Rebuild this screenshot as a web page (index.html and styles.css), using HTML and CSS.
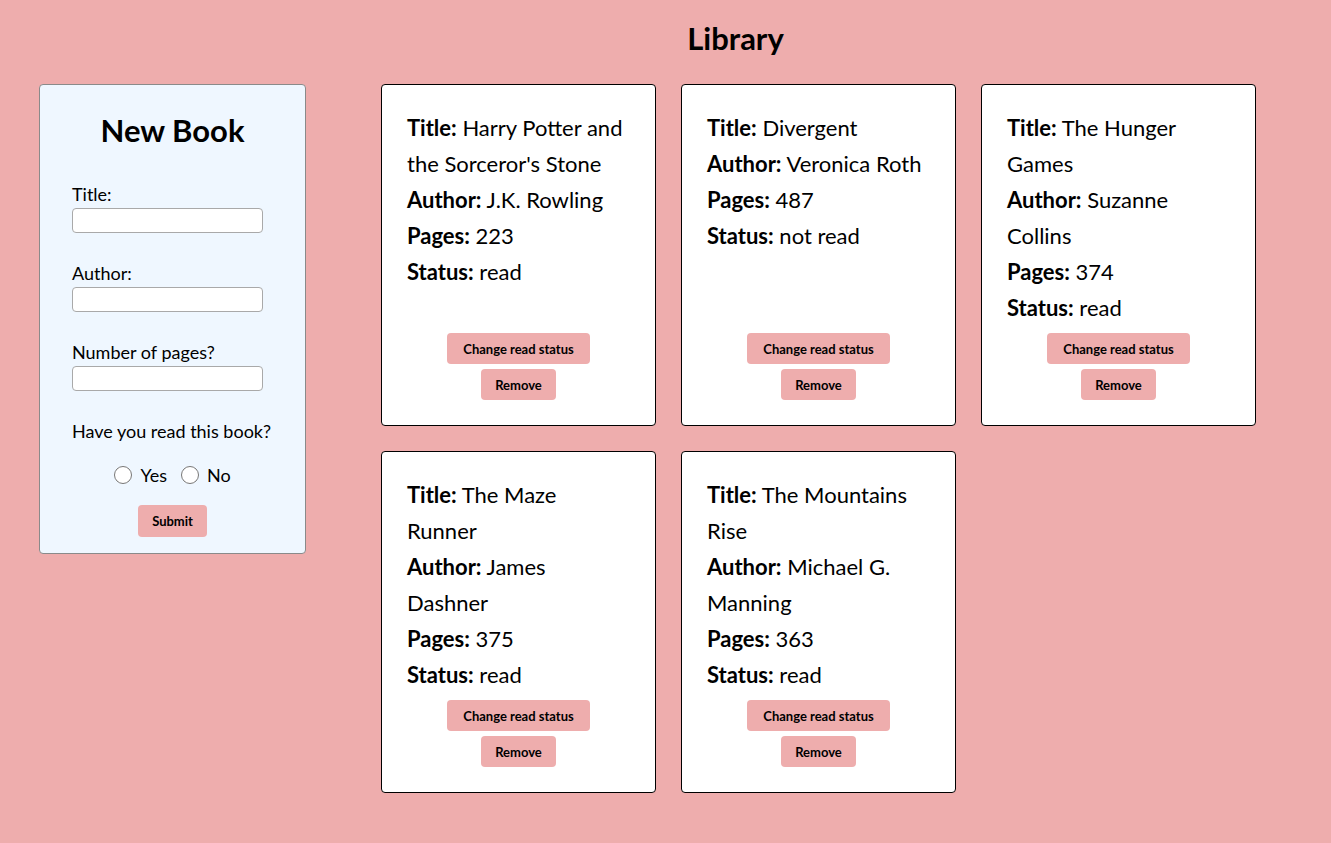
FILE: index.html
```html
<!DOCTYPE html>
<html lang="en">
<head>
<meta charset="utf-8">
<title>Library</title>
<link rel="stylesheet" href="styles.css">
</head>
<body>
<header class="top">
  <h1 class="title">Library</h1>
</header>
<div class="content">
  <form class="new-book">
    <h2 class="form-title">New Book</h2>
    <div class="field">
      <label class="label" for="t">Title:</label>
      <input class="input" id="t" type="text">
    </div>
    <div class="field">
      <label class="label" for="a">Author:</label>
      <input class="input" id="a" type="text">
    </div>
    <div class="field">
      <label class="label" for="p">Number of pages?</label>
      <input class="input" id="p" type="text">
    </div>
    <p class="question">Have you read this book?</p>
    <div class="radios">
      <label class="radio"><input type="radio" name="r" class="radio-input"> Yes</label>
      <label class="radio"><input type="radio" name="r" class="radio-input"> No</label>
    </div>
    <div class="submit-row"><button type="button" class="btn btn-submit">Submit</button></div>
  </form>
  <main class="cards">
    <div class="card">
      <div class="info">
        <p class="line"><b>Title:</b> Harry Potter and the Sorceror's Stone</p>
        <p class="line"><b>Author:</b> J.K. Rowling</p>
        <p class="line"><b>Pages:</b> 223</p>
        <p class="line"><b>Status:</b> read</p>
      </div>
      <div class="actions">
        <button class="btn btn-change">Change read status</button>
        <button class="btn btn-remove">Remove</button>
      </div>
    </div>
    <div class="card">
      <div class="info">
        <p class="line"><b>Title:</b> Divergent</p>
        <p class="line"><b>Author:</b> Veronica Roth</p>
        <p class="line"><b>Pages:</b> 487</p>
        <p class="line"><b>Status:</b> not read</p>
      </div>
      <div class="actions">
        <button class="btn btn-change">Change read status</button>
        <button class="btn btn-remove">Remove</button>
      </div>
    </div>
    <div class="card">
      <div class="info">
        <p class="line"><b>Title:</b> The Hunger Games</p>
        <p class="line"><b>Author:</b> Suzanne Collins</p>
        <p class="line"><b>Pages:</b> 374</p>
        <p class="line"><b>Status:</b> read</p>
      </div>
      <div class="actions">
        <button class="btn btn-change">Change read status</button>
        <button class="btn btn-remove">Remove</button>
      </div>
    </div>
    <div class="card">
      <div class="info">
        <p class="line"><b>Title:</b> The Maze Runner</p>
        <p class="line"><b>Author:</b> James Dashner</p>
        <p class="line"><b>Pages:</b> 375</p>
        <p class="line"><b>Status:</b> read</p>
      </div>
      <div class="actions">
        <button class="btn btn-change">Change read status</button>
        <button class="btn btn-remove">Remove</button>
      </div>
    </div>
    <div class="card">
      <div class="info">
        <p class="line"><b>Title:</b> The Mountains Rise</p>
        <p class="line"><b>Author:</b> Michael G. Manning</p>
        <p class="line"><b>Pages:</b> 363</p>
        <p class="line"><b>Status:</b> read</p>
      </div>
      <div class="actions">
        <button class="btn btn-change">Change read status</button>
        <button class="btn btn-remove">Remove</button>
      </div>
    </div>
  </main>
</div>
</body>
</html>
```
FILE: styles.css
```css
* { box-sizing: border-box; }
body {
  margin: 0;
  background: #eeadad;
  font-family: Lato, "Open Sans", sans-serif;
  color: #000;
}
.top {
  padding: 16px 0 0 140px;
  height: 84px;
}
.title {
  margin: 0;
  text-align: center;
  font-size: 31px;
  line-height: 44px;
  font-weight: 700;
}
.content {
  display: flex;
  align-items: flex-start;
  padding-left: 39px;
  gap: 75px;
}
.new-book {
  width: 267px;
  height: 470px;
  background: #eff7ff;
  border: 1px solid #8a8a8a;
  border-radius: 4px;
  padding: 23px 32px 15px;
}
.form-title {
  margin: 0 0 27px;
  text-align: center;
  font-size: 31px;
  line-height: 45px;
  font-weight: 700;
}
.field { margin-bottom: 26px; }
.label {
  display: block;
  font-size: 18px;
  line-height: 28px;
}
.input {
  display: block;
  width: 191px;
  height: 25px;
  border: 1px solid #a9a9a9;
  border-radius: 4px;
  background: #fff;
  margin: 0;
}
.question {
  margin: 0 0 16px;
  font-size: 18px;
  line-height: 28px;
  white-space: nowrap;
}
.radios {
  display: flex;
  justify-content: center;
  gap: 14px;
  font-size: 18px;
  line-height: 28px;
  margin-bottom: 16px;
}
.radio { display: flex; align-items: center; gap: 8px; }
.radio-input { width: 18px; height: 18px; margin: 0; }
.submit-row { display: flex; justify-content: center; }
.btn {
  border: none;
  background: #eeadad;
  border-radius: 4px;
  font-family: Lato, sans-serif;
  font-size: 13px;
  font-weight: 700;
  color: #000;
  height: 31px;
  padding: 0;
}
.btn-submit { width: 69px; height: 32px; }
.btn-change { width: 143px; }
.btn-remove { width: 75px; }
.cards {
  display: grid;
  grid-template-columns: repeat(3, 275px);
  gap: 25px;
}
.card {
  height: 342px;
  background: #fff;
  border: 1px solid #000;
  border-radius: 4px;
  padding: 25px 25px 25px;
  display: flex;
  flex-direction: column;
  justify-content: space-between;
}
.line {
  margin: 0;
  font-size: 22px;
  line-height: 36px;
}
.line b { font-weight: 700; }
.actions {
  display: flex;
  flex-direction: column;
  align-items: center;
  gap: 5px;
}
```
